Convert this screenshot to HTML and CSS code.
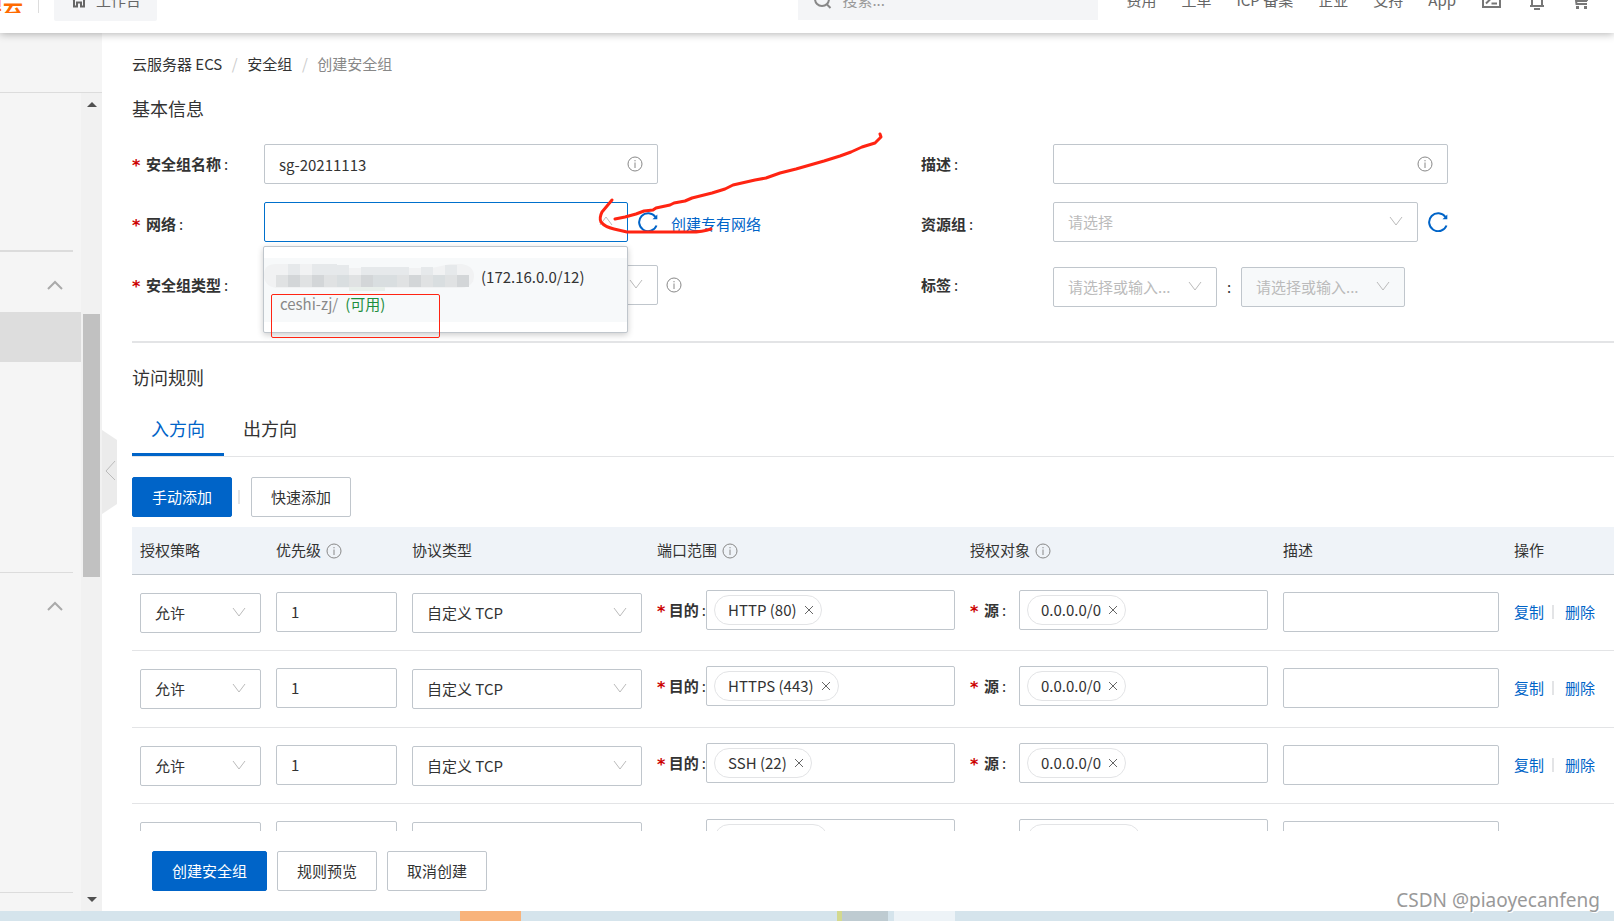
FILE: index.html
```html
<!DOCTYPE html>
<html lang="zh-CN">
<head>
<meta charset="utf-8">
<title>创建安全组</title>
<link rel="stylesheet" href="styles.css">
</head>
<body>
<svg class="defs" aria-hidden="true">
  <symbol id="i-info" viewBox="0 0 16 16"><circle cx="8" cy="8" r="7"/><path d="M8 6.5V12M8 4v1.3"/></symbol>
  <symbol id="i-down" viewBox="0 0 14 10"><path d="M1 1l6 8 6-8"/></symbol>
  <symbol id="i-x" viewBox="0 0 10 10"><path d="M1 1l8 8M9 1L1 9"/></symbol>
  <symbol id="i-refresh" viewBox="0 0 20 20"><path d="M18.500 13.500A9 9 0 1 1 17.500 5"/><path class="fill" d="M19.300 2.500v4.800h-4.800z"/></symbol>
  <symbol id="i-up" viewBox="0 0 16 10"><path d="M1 9l7-7 7 7"/></symbol>
</svg>

<header class="topbar">
  <div class="topbar-inner">
    <div class="logo"><span>里云</span></div>
    <button class="workbench"><svg class="ico-home" viewBox="0 0 16 16"><path d="M1 7.500L8 1.500l7 6M3 6.500v8h3v-4h4v4h3v-8"/></svg>工作台</button>
    <label class="search"><svg viewBox="0 0 18 18"><circle cx="8" cy="8" r="7"/><path d="M12.500 13l4 4"/></svg><input type="text" placeholder="搜索..." aria-label="搜索"></label>
    <nav class="topnav">
      <a href="#">费用</a><a href="#">工单</a><a href="#">ICP 备案</a><a href="#">企业</a><a href="#">支持</a><a href="#">App</a>
    </nav>
    <div class="topicons">
      <svg width="19" height="16" viewBox="0 0 19 16"><path d="M1 1h17v14H1zM4 4l4 3.500-4 4M9.500 11.500H15"/></svg>
      <svg width="16" height="20" viewBox="0 0 16 20"><path d="M1 16h14M3 16V8a5 5 0 0 1 10 0v8M5 19h6"/></svg>
      <svg width="16" height="18" viewBox="0 0 16 18"><path d="M0 2h2l1.500 11H14M3 5h12l-1 4H4"/><path class="fill" d="M3 5h12l-1 6H3.500zM3 15h3v3H3zM11 15h3v3h-3z"/></svg>
    </div>
  </div>
</header>

<div class="shell">
  <aside class="sidebar">
    <div class="side-head"></div>
    <div class="side-body">
      <div class="side-menu">
        <div class="side-group side-first"></div>
        <div class="side-group side-second"><button class="fold" aria-label="收起"><svg><use href="#i-up"/></svg></button><div class="side-current"></div></div>
        <div class="side-group side-third"><button class="fold" aria-label="收起"><svg><use href="#i-up"/></svg></button></div>
        <div class="side-group"></div>
      </div>
      <div class="scroller"><i class="tri-up"></i><div class="thumb"></div><i class="tri-down"></i></div>
    </div>
    <button class="collapse" aria-label="收起侧栏"><svg viewBox="0 0 15 84"><path class="tab" d="M0 0l15 10v64L0 84z"/><path class="mark" d="M13 31L4 41l9 9"/></svg></button>
  </aside>

  <main class="page">
    <div class="scroll">
      <nav class="crumbs"><a href="#">云服务器 ECS</a><i>/</i><a href="#">安全组</a><i>/</i><span>创建安全组</span></nav>
      <h2>基本信息</h2>
      <form class="form">
        <label class="label req" for="name">安全组名称<b>:</b></label>
        <div class="field"><input class="box" id="name" value="sg-20211113"><svg class="info inside"><use href="#i-info"/></svg></div>
        <label class="label col-right" for="desc">描述<b>:</b></label>
        <div class="field"><input class="box" id="desc"><svg class="info inside"><use href="#i-info"/></svg></div>

        <label class="label req mid" for="net">网络<b>:</b></label>
        <div class="field spill">
          <div class="select grow"><input class="box active" id="net" role="combobox" aria-expanded="true"><svg class="chev flip"><use href="#i-down"/></svg>
            <ul class="menu" role="listbox">
              <li role="option" aria-selected="false">
                <div class="line"><svg class="mosaic" viewBox="0 0 210 30" aria-hidden="true">
                  <path fill="#f1f2f3" d="M12 2h58l14 4h84l18-4h12q12 2 12 12t-12 12H12Q0 24 0 13T12 2z"/>
                  <g fill="#e6e9eb"><path d="M24 2h12v11H24zM48 2h25v11H48zM73 3h12v10H73zM97 5h24v8H97zM121 5h24v8h-24zM157 5h12v8h-12zM181 3h12v10h-12z"/></g>
                  <g fill="#e0e2e3"><path d="M12 13h12v12H12zM36 13h12v12H36zM60 13h13v12H60zM85 13h12v12H85zM133 13h12v12h-12zM157 13h12v12h-12zM181 13h12v12h-12z"/></g>
                  <g fill="#d3d6d8"><path d="M24 13h12v12H24zM48 13h12v12H48zM97 13h12v12H97zM145 13h12v12h-12zM193 13h12v12h-12z"/></g>
                  <g fill="#d9dee0"><path d="M73 13h12v12H73zM109 13h12v12h-12zM121 13h12v12h-12zM169 13h12v12h-12z"/></g>
                  <path fill="#e9efeb" d="M85 25h36v4H85z"/></svg><span>(172.16.0.0/12)</span></div>
                <div class="line sub">ceshi-zj/<span class="ok">(可用)</span></div>
              </li>
            </ul>
          </div>
          <button type="button" class="refresh" aria-label="刷新"><svg><use href="#i-refresh"/></svg></button>
          <a class="link mid" href="#">创建专有网络</a>
        </div>
        <label class="label col-right mid" for="rg">资源组<b>:</b></label>
        <div class="field"><div class="select grow"><select class="box muted" id="rg"><option>请选择</option></select><svg class="chev"><use href="#i-down"/></svg></div><button type="button" class="refresh" aria-label="刷新"><svg><use href="#i-refresh"/></svg></button></div>

        <label class="label req" for="type">安全组类型<b>:</b></label>
        <div class="field spill"><div class="select full"><select class="box" id="type"><option></option></select><svg class="chev"><use href="#i-down"/></svg></div><svg class="info"><use href="#i-info"/></svg></div>
        <label class="label col-right" for="tagk">标签<b>:</b></label>
        <div class="field tags"><div class="select"><select class="box muted" id="tagk"><option>请选择或输入...</option></select><svg class="chev"><use href="#i-down"/></svg></div><span class="colon">:</span><div class="select"><select class="box muted" disabled aria-label="标签值"><option>请选择或输入...</option></select><svg class="chev"><use href="#i-down"/></svg></div></div>
      </form>

      <h2 class="rules-title">访问规则</h2>
      <div class="tabs" role="tablist"><button class="on" role="tab">入方向</button><button role="tab">出方向</button></div>
      <div class="actions"><button class="btn primary">手动添加</button><i class="bar"></i><button class="btn">快速添加</button></div>

      <table class="rules">
        <colgroup><col class="c-policy"><col class="c-policy"><col class="c-proto"><col><col><col class="c-desc"><col class="c-ops"></colgroup>
        <thead><tr><th>授权策略</th><th>优先级<svg class="info"><use href="#i-info"/></svg></th><th>协议类型</th><th>端口范围<svg class="info"><use href="#i-info"/></svg></th><th>授权对象<svg class="info"><use href="#i-info"/></svg></th><th>描述</th><th>操作</th></tr></thead>
        <tbody>
          <tr>
            <td class="low"><div class="select"><select class="box" aria-label="授权策略"><option>允许</option></select><svg class="chev"><use href="#i-down"/></svg></div></td>
            <td><input class="box" value="1" aria-label="优先级"></td>
            <td class="low"><div class="select"><select class="box" aria-label="协议类型"><option>自定义 TCP</option></select><svg class="chev"><use href="#i-down"/></svg></div></td>
            <td class="high"><div class="pair"><span class="label req port">目的<b>:</b></span><div class="box chips"><span class="chip">HTTP (80)<button aria-label="移除"><svg><use href="#i-x"/></svg></button></span></div></div></td>
            <td class="high"><div class="pair"><span class="label req src">源<b>:</b></span><div class="box chips"><span class="chip">0.0.0.0/0<button aria-label="移除"><svg><use href="#i-x"/></svg></button></span></div></div></td>
            <td><input class="box" aria-label="描述"></td>
            <td><div class="ops"><a href="#">复制</a><i class="bar"></i><a href="#">删除</a></div></td>
          </tr>
          <tr>
            <td class="low"><div class="select"><select class="box" aria-label="授权策略"><option>允许</option></select><svg class="chev"><use href="#i-down"/></svg></div></td>
            <td><input class="box" value="1" aria-label="优先级"></td>
            <td class="low"><div class="select"><select class="box" aria-label="协议类型"><option>自定义 TCP</option></select><svg class="chev"><use href="#i-down"/></svg></div></td>
            <td class="high"><div class="pair"><span class="label req port">目的<b>:</b></span><div class="box chips"><span class="chip">HTTPS (443)<button aria-label="移除"><svg><use href="#i-x"/></svg></button></span></div></div></td>
            <td class="high"><div class="pair"><span class="label req src">源<b>:</b></span><div class="box chips"><span class="chip">0.0.0.0/0<button aria-label="移除"><svg><use href="#i-x"/></svg></button></span></div></div></td>
            <td><input class="box" aria-label="描述"></td>
            <td><div class="ops"><a href="#">复制</a><i class="bar"></i><a href="#">删除</a></div></td>
          </tr>
          <tr>
            <td class="low"><div class="select"><select class="box" aria-label="授权策略"><option>允许</option></select><svg class="chev"><use href="#i-down"/></svg></div></td>
            <td><input class="box" value="1" aria-label="优先级"></td>
            <td class="low"><div class="select"><select class="box" aria-label="协议类型"><option>自定义 TCP</option></select><svg class="chev"><use href="#i-down"/></svg></div></td>
            <td class="high"><div class="pair"><span class="label req port">目的<b>:</b></span><div class="box chips"><span class="chip">SSH (22)<button aria-label="移除"><svg><use href="#i-x"/></svg></button></span></div></div></td>
            <td class="high"><div class="pair"><span class="label req src">源<b>:</b></span><div class="box chips"><span class="chip">0.0.0.0/0<button aria-label="移除"><svg><use href="#i-x"/></svg></button></span></div></div></td>
            <td><input class="box" aria-label="描述"></td>
            <td><div class="ops"><a href="#">复制</a><i class="bar"></i><a href="#">删除</a></div></td>
          </tr>
          <tr>
            <td class="low"><div class="select"><select class="box" aria-label="授权策略"><option></option></select></div></td>
            <td><input class="box" aria-label="优先级"></td>
            <td class="low"><div class="select"><select class="box" aria-label="协议类型"><option></option></select></div></td>
            <td class="high"><div class="pair"><span class="port"></span><div class="box chips"><span class="chip blank"></span></div></div></td>
            <td class="high"><div class="pair"><span class="src"></span><div class="box chips"><span class="chip blank"></span></div></div></td>
            <td><input class="box" aria-label="描述"></td>
            <td></td>
          </tr>
        </tbody>
      </table>
    </div>
    <footer class="footer"><button class="btn primary">创建安全组</button><button class="btn">规则预览</button><button class="btn">取消创建</button></footer>
  </main>
</div>

<div class="taskbar"><i class="orange"></i><i class="lime"></i><i class="slate"></i><i class="pale"></i></div>

<svg class="ink" width="300" height="110" viewBox="590 130 300 110" aria-hidden="true">
  <path d="M612 200L602 212Q599 218 601 222Q605 227 614 229L627 232H690Q703 232 711 229"/>
  <path d="M615 219l10-2 11-3 8-3 9-1 3-2 14-3 4-2 11-2 7-3 20-5 13-4 8-4 22-5 11-2 14-5 16-4 28-8 16-5 11-4 11-5 13-4 6-6-1-3"/>
</svg>
<div class="mark-rect"></div>
<div class="watermark">CSDN @piaoyecanfeng</div>
</body>
</html>
```
FILE: styles.css
```css
* { box-sizing: border-box; }

body {
  margin: 0;
  height: 100vh;
  display: flex;
  flex-direction: column;
  overflow: hidden;
  position: relative;
  background: #fff;
  color: #333;
  font: 15px/22px "Noto Sans CJK SC", "Noto Sans", sans-serif;
}

button, input, select { font: inherit; color: inherit; margin: 0; }
button { border: 0; background: none; padding: 0; }
a { color: inherit; text-decoration: none; }
i { font-style: normal; }
svg { flex: none; fill: none; stroke: currentColor; }
svg .fill { fill: currentColor; stroke: none; }
.defs { position: absolute; width: 0; height: 0; }

/* Top bar */
.topbar {
  height: 33px;
  flex: none;
  display: flex;
  align-items: flex-end;
  background: #fff;
  box-shadow: 0 1px 8px rgba(0, 0, 0, .3);
  position: relative;
  z-index: 2;
  clip-path: inset(0 0 -12px 0);
}
.topbar-inner { flex: 1; height: 66px; display: flex; align-items: center; color: #666; }
.logo {
  width: 39px;
  height: 26px;
  padding: 6px 15px 0 0;
  border-right: 1px solid #ddd;
  display: flex;
  justify-content: flex-end;
  overflow: hidden;
  color: #ff6a00;
  font-size: 20px;
  font-weight: 700;
  line-height: 26px;
  white-space: nowrap;
}
.workbench {
  height: 42px;
  margin-left: 15px;
  padding: 0 16px 0 17px;
  display: flex;
  align-items: center;
  gap: 9px;
  border-radius: 2px;
  background: #f4f5f7;
  white-space: nowrap;
}
.ico-home { width: 16px; height: 16px; stroke-width: 2; }
.search {
  width: 300px;
  height: 40px;
  margin-left: auto;
  padding-left: 16px;
  display: flex;
  align-items: center;
  gap: 10px;
  background: #f4f5f7;
  color: #888;
}
.search svg { width: 18px; height: 18px; stroke-width: 2; }
.search input { flex: 1; min-width: 0; border: 0; padding: 0; background: none; outline: 0; }
.search input::placeholder { color: #999; }
.topnav { display: flex; gap: 25px; margin-left: 28px; white-space: nowrap; }
.topicons { display: flex; align-items: center; gap: 28px; margin: 0 25px 0 26px; color: #777; stroke-width: 2; }

/* Shell */
.shell { flex: 1; min-height: 0; display: flex; }
.sidebar { width: 102px; flex: none; display: flex; flex-direction: column; position: relative; background: #f5f5f5; }
.side-head { height: 60px; border-bottom: 1px solid #dcdcdc; }
.side-body { flex: 1; min-height: 0; display: flex; }
.side-menu { flex: 1; display: flex; flex-direction: column; }
.side-group { position: relative; }
.side-group:not(:last-child)::after { content: ""; position: absolute; left: 0; right: 8px; bottom: 0; height: 1px; background: #dcdcdc; }
.side-first { height: 159px; }
.side-group.side-first::after { height: 2px; }
.side-second { height: 321px; }
.side-third { height: 320px; }
.fold { display: block; margin-left: 47px; padding-top: 5px; height: 60px; color: #aaa; }
.fold svg { display: block; width: 16px; height: 10px; stroke-width: 2; }
.side-current { height: 50px; background: #ddd; }
.scroller { width: 21px; padding: 9px 0; display: flex; flex-direction: column; align-items: center; background: #f1f1f1; }
.thumb { width: 17px; height: 263px; margin-top: 207px; background: #c1c1c1; }
.tri-up, .tri-down { border: 5px solid transparent; }
.tri-up { border-top: 0; border-bottom-color: #505050; }
.tri-down { border-bottom: 0; border-top-color: #505050; margin-top: auto; }
.collapse { position: absolute; left: 102px; top: 397px; z-index: 1; }
.collapse svg { display: block; width: 15px; height: 84px; }
.collapse .tab { fill: #ebebeb; stroke: none; }
.collapse .mark { stroke: #bbb; }

/* Page */
.page { flex: 1; min-width: 0; display: flex; flex-direction: column; }
.scroll { flex: 1; min-height: 0; overflow: hidden; padding: 20px 0 0 30px; }
.crumbs { display: flex; }
.crumbs i { width: 25px; text-align: center; color: #ccc; }
.crumbs span { color: #888; }
h2 { margin: 19px 0 0; font-size: 18px; line-height: 28px; font-weight: 400; }

.form {
  display: grid;
  grid-template-columns: 132fr 394fr 263fr 132fr 395fr 166fr;
  grid-template-rows: 58px 63px 76px;
  align-items: start;
  margin-top: 22px;
  border-bottom: 2px solid #e3e4e6;
}
.label { height: 40px; display: flex; align-items: center; font-weight: 700; white-space: nowrap; }
.label b { margin-left: 3px; font-weight: 400; }
.mid { padding-top: 4px; }
.req::before { content: "*"; width: 14px; padding-top: 4px; color: #c00; font: 700 16px/22px "DejaVu Sans", sans-serif; }
.col-right { grid-column: 4; }
.req:not(.port):not(.src) { grid-column: 1; }
.field { height: 40px; display: flex; align-items: center; position: relative; min-width: 0; }

.box {
  display: block;
  width: 100%;
  height: 40px;
  padding: 0 14px;
  border: 1px solid #c0c6cc;
  border-radius: 2px;
  background: #fff;
  outline: 0;
  appearance: none;
}
.box.active { border-color: #0070cc; }
.box.muted { color: #bbb; opacity: 1; }
.box:disabled { background: #f7f9fa; }
.select { position: relative; }
.grow { flex: 1; min-width: 0; }
.full { width: 100%; flex: none; }
.chev { position: absolute; right: 15px; top: 14px; width: 14px; height: 10px; color: #bbb; pointer-events: none; }
.flip { transform: scaleY(-1); }
.info { width: 16px; height: 16px; color: #888; }
.inside { position: absolute; right: 15px; top: 12px; }
.refresh { margin-left: 10px; width: 20px; height: 20px; color: #0064c8; }
.refresh svg { display: block; width: 20px; height: 20px; stroke-width: 2; }
.spill { white-space: nowrap; }
.spill .info { margin-left: 8px; }
.spill .link { width: 0; text-indent: 13px; color: #0064c8; }
.tags { padding-top: 4px; }
.tags .select { width: 164px; }
.colon { width: 24px; text-align: center; }

.menu {
  position: absolute;
  z-index: 3;
  left: -1px;
  right: 0;
  top: 44px;
  margin: 0;
  padding: 11px 0 10px;
  list-style: none;
  background: #fff;
  border: 1px solid #c0c6cc;
  border-radius: 2px;
  box-shadow: 0 2px 6px rgba(0, 0, 0, .2);
}
.menu li { height: 64px; padding-top: 5px; background: #f7f9fa; }
.line { height: 27px; display: flex; align-items: center; gap: 7px; }
.mosaic { width: 210px; height: 30px; stroke: none; }
.sub { padding-left: 16px; color: #888; }
.ok { color: #1e8e3e; }

/* Rules */
.rules-title { margin-top: 20px; }
.tabs { display: flex; margin-top: 16px; border-bottom: 1px solid #e3e4e6; }
.tabs button { height: 49px; padding: 0 19px 4px; border-bottom: 3px solid transparent; font-size: 18px; line-height: 28px; }
.tabs .on { color: #0064c8; border-color: #0064c8; }
.actions { display: flex; align-items: center; margin: 20px 0 10px; }
.btn { height: 40px; padding: 0 19px; border: 1px solid #c0c6cc; border-radius: 2px; background: #fff; white-space: nowrap; }
.btn.primary { background: #0064c8; border-color: #0064c8; color: #fff; }
.bar { width: 2px; height: 14px; background: #e3e4e6; }
.actions .bar { margin: 0 11px 0 6px; }

.rules { width: 100%; table-layout: fixed; border-collapse: collapse; }
.c-policy { width: 136px; }
.c-proto { width: 245px; }
.c-desc { width: 231px; }
.c-ops { width: 108px; }
.rules th { height: 47px; padding: 0 8px; background: #eff3f8; border-bottom: 1px solid #c0c6cc; font-weight: 400; text-align: left; white-space: nowrap; }
.rules th .info { margin-left: 5px; vertical-align: -3px; }
.rules td { height: 76px; padding: 17px 7px 0 8px; vertical-align: top; border-bottom: 1px solid #e3e4e6; }
.rules tr:nth-child(even) td { height: 77px; }
.rules td.low { padding-top: 18px; }
.rules td.high { padding-top: 15px; }
.pair { display: flex; }
.port { width: 49px; flex: none; }
.src { width: 49px; flex: none; }
.chips { flex: 1; min-width: 0; width: auto; padding: 4px 7px; }
.chip { display: inline-flex; align-items: center; gap: 7px; height: 30px; padding: 0 7px 0 13px; border: 1px solid #e3e4e6; border-radius: 15px; vertical-align: top; white-space: nowrap; }
.chip button { width: 10px; height: 10px; color: #666; }
.chip svg { display: block; width: 10px; height: 10px; }
.blank { width: 114px; }
.ops { display: flex; align-items: center; height: 40px; color: #0064c8; white-space: nowrap; }
.ops .bar { margin: 0 11px 0 8px; }

.footer { height: 80px; flex: none; display: flex; align-items: center; gap: 10px; padding-left: 50px; background: #fff; }

.taskbar { height: 10px; flex: none; display: flex; background: #d5e4ec; }
.orange { width: 61px; margin-left: 460px; background: #f8b37b; }
.lime { width: 5px; margin-left: 316px; background: #d3d98f; }
.slate { width: 46px; background: #becbd1; }
.pale { width: 61px; margin-left: 6px; background: #edf3f7; }

/* Annotations drawn over the page */
.ink { position: absolute; z-index: 5; left: 590px; top: 130px; stroke: #ff2412; stroke-width: 3; stroke-linecap: round; stroke-linejoin: round; pointer-events: none; }
.mark-rect { position: absolute; z-index: 5; left: 271px; top: 294px; width: 169px; height: 44px; border: 1px solid #ff2412; border-radius: 2px; pointer-events: none; }
.watermark { position: absolute; z-index: 5; right: 14px; bottom: 6px; font: 19px/30px "Noto Sans", sans-serif; color: #999; text-shadow: 1px 1px 0 #fff; }
```
